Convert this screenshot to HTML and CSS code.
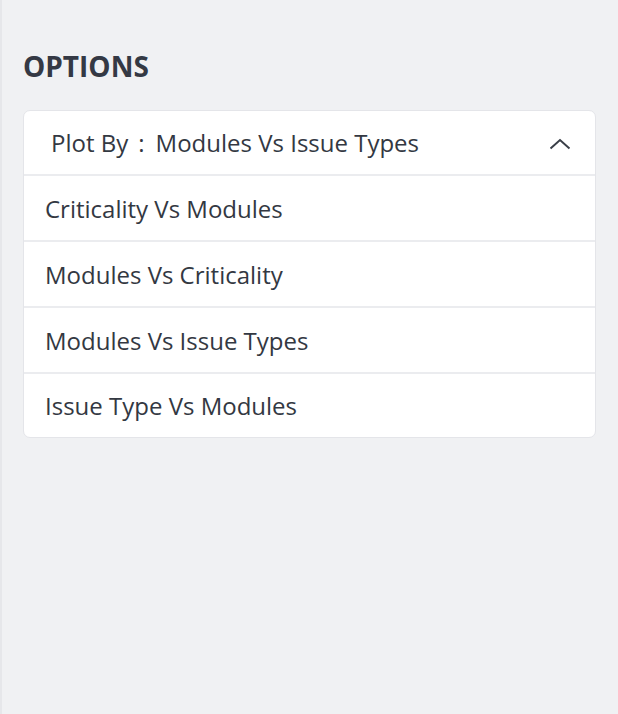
FILE: index.html
```html
<!DOCTYPE html>
<html>
<head>
<meta charset="utf-8">
<link rel="stylesheet" href="styles.css">
</head>
<body>
<div class="panel">
  <h2 class="title">OPTIONS</h2>
  <div class="card">
    <div class="head">
      <span class="head-label">Plot By<span class="colon">:</span>Modules Vs Issue Types</span>
      <svg class="chev" width="22" height="12" viewBox="0 0 22 12"><path d="M1.5 10.5 L11 2 L20.5 10.5" fill="none" stroke="#3a3f48" stroke-width="2"/></svg>
    </div>
    <div class="item">Criticality Vs Modules</div>
    <div class="item">Modules Vs Criticality</div>
    <div class="item">Modules Vs Issue Types</div>
    <div class="item">Issue Type Vs Modules</div>
  </div>
</div>
</body>
</html>
```
FILE: styles.css
```css
html, body {
  margin: 0;
  padding: 0;
  height: 100%;
}
body {
  background: #f0f1f3;
  font-family: "Open Sans", "Noto Sans", sans-serif;
  color: #333842;
}
.panel {
  height: 100%;
  box-sizing: border-box;
  border-left: 2px solid #e6e7ea;
  padding: 48px 22px 0 21px;
}
.title {
  margin: 0 0 26px 0;
  font-size: 28px;
  font-weight: 700;
  line-height: 36px;
  color: #343944;
  letter-spacing: 0;
}
.card {
  background: #fff;
  border: 1px solid #e4e5e9;
  border-radius: 7px;
  overflow: hidden;
}
.head {
  height: 63px;
  display: flex;
  align-items: center;
  justify-content: space-between;
  padding: 0 24px 0 27px;
  border-bottom: 2px solid #ebecef;
  font-size: 24px;
  font-weight: 500;
}
.colon {
  margin: 0 11px 0 10px;
}
.chev {
  margin-top: 3px;
}
.item {
  height: 64px;
  display: flex;
  align-items: center;
  padding-left: 21px;
  font-size: 24px;
  font-weight: 500;
  border-bottom: 2px solid #ebecef;
}
.item:last-child {
  border-bottom: none;
  height: 63px;
}
```
